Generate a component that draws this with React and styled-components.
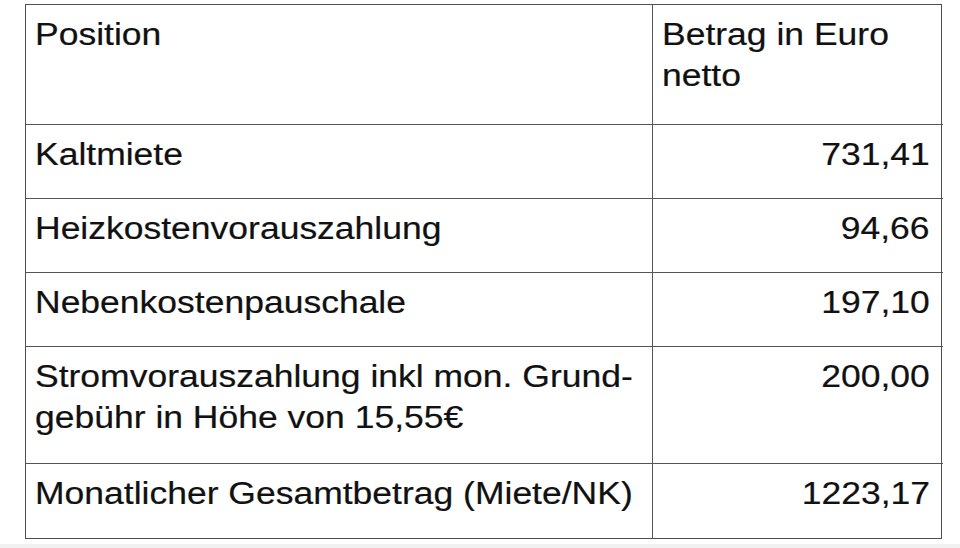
import React from "react";
import styled, { createGlobalStyle } from "styled-components";

const Global = createGlobalStyle`
  html, body { margin: 0; padding: 0; background: #ffffff; }
  body { width: 960px; height: 548px; overflow: hidden; }
`;

const Page = styled.div`
  width: 960px;
  height: 548px;
  display: flex;
  flex-direction: column;
  background: #ffffff;
`;

const Sheet = styled.div`
  flex: 1;
  padding: 4px 0 0 25px;
`;

const Footer = styled.div`
  height: 4px;
  background: #f1f1f1;
`;

const Table = styled.div`
  width: 917px;
  display: grid;
  grid-template-columns: 626px 291px;
  border: 1.5px solid #505050;
  box-sizing: border-box;
`;

const Cell = styled.div`
  height: ${(p) => p.$h}px;
  box-sizing: border-box;
  padding: 9px ${(p) => (p.$right ? "13px" : "0")} 0 ${(p) => (p.$right ? "0" : "9px")};
  border-bottom: ${(p) => (p.$last ? "none" : "1.5px solid #555")};
  border-left: ${(p) => (p.$col2 ? "1.5px solid #555" : "none")};
  text-align: ${(p) => (p.$right ? "right" : "left")};
  font-family: "Liberation Sans", Arial, sans-serif;
  font-size: 31px;
  line-height: 41px;
  color: #111111;
`;

const Text = styled.span`
  display: inline-block;
  white-space: nowrap;
  -webkit-text-stroke: 0.2px #111111;
  transform: scaleX(1.145);
  transform-origin: ${(p) => (p.$right ? "right" : "left")} center;
`;

const rows = [
  { h: 120, a: ["Position"], b: ["Betrag in Euro", "netto"], bRight: false },
  { h: 74, a: ["Kaltmiete"], b: ["731,41"], bRight: true },
  { h: 74, a: ["Heizkostenvorauszahlung"], b: ["94,66"], bRight: true },
  { h: 74, a: ["Nebenkostenpauschale"], b: ["197,10"], bRight: true },
  {
    h: 117,
    a: ["Stromvorauszahlung inkl mon. Grund-", "gebühr in Höhe von 15,55€"],
    b: ["200,00"],
    bRight: true,
  },
  { h: 74, a: ["Monatlicher Gesamtbetrag (Miete/NK)"], b: ["1223,17"], bRight: true },
];

function Lines({ lines, right }) {
  return lines.map((l, i) => (
    <div key={i}>
      <Text $right={right}>{l}</Text>
    </div>
  ));
}

export default function App() {
  return (
    <>
      <Global />
      <Page>
        <Sheet>
          <Table>
            {rows.map((r, i) => {
              const last = i === rows.length - 1;
              return (
                <React.Fragment key={i}>
                  <Cell $h={r.h} $last={last}>
                    <Lines lines={r.a} />
                  </Cell>
                  <Cell $h={r.h} $last={last} $col2 $right={r.bRight}>
                    <Lines lines={r.b} right={r.bRight} />
                  </Cell>
                </React.Fragment>
              );
            })}
          </Table>
        </Sheet>
        <Footer />
      </Page>
    </>
  );
}
